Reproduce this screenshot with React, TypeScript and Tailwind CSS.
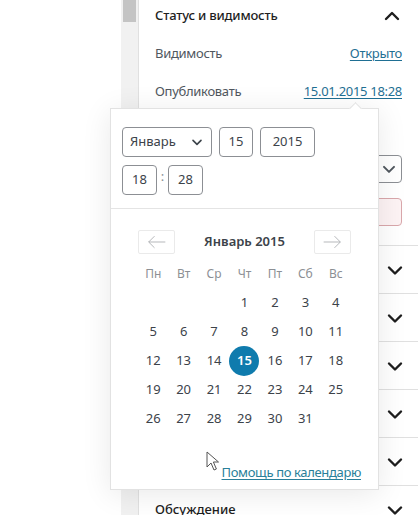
const days: (number | null)[] = [null, null, null, ...Array.from({ length: 31 }, (_, i) => i + 1)];
const weekdays = ["Пн", "Вт", "Ср", "Чт", "Пт", "Сб", "Вс"];
// titles of these panels sit under the date popover, only the last one shows
const panels = ["", "", "", "", "", "Обсуждение"];

function Chevron({ up, className }: { up?: boolean; className?: string }) {
  return (
    <svg viewBox="0 0 24 24" className={className} fill="none" stroke="currentColor" strokeWidth={2.4} strokeLinecap="round" strokeLinejoin="round">
      <path d={up ? "M6 15l6-6 6 6" : "M6 9.5l6 6 6-6"} />
    </svg>
  );
}

function Arrow({ right }: { right?: boolean }) {
  return (
    <svg viewBox="0 0 24 16" className="w-[20px] h-[14px]" fill="none" stroke="currentColor" strokeWidth={1}>
      <path d={right ? "M2 8h20M15 1l7 7-7 7" : "M22 8H2M9 1L2 8l7 7"} />
    </svg>
  );
}

function DatePopover() {
  return (
    <div className="absolute left-[110px] top-[108px] w-[269px] h-[382px] bg-white border border-[#e2e2e2] shadow-[0_4px_28px_rgba(0,0,0,0.09)]">
      <div className="absolute -top-[5px] left-[240px] w-[9px] h-[9px] rotate-45 bg-white border-l border-t border-[#e2e2e2]" />
      <div className="px-[11px] pt-[18px]">
        <div className="flex gap-[7px]">
          <div className="w-[90px] h-[30px] border border-[#8c8f94] rounded-[4px] flex items-center justify-between pl-[7px] pr-[6px] text-[13px] text-[#3c434a]">
            Январь
            <Chevron className="w-[16px] h-[16px] text-[#3c434a]" />
          </div>
          <div className="w-[34px] h-[30px] border border-[#8c8f94] rounded-[4px] flex items-center justify-center text-[13px] text-[#3c434a]">15</div>
          <div className="w-[55px] h-[30px] border border-[#8c8f94] rounded-[4px] flex items-center justify-center text-[13px] text-[#3c434a]">2015</div>
        </div>
        <div className="flex items-center mt-[8px]">
          <div className="w-[35px] h-[30px] border border-[#8c8f94] rounded-[4px] flex items-center justify-center text-[13px] text-[#3c434a]">18</div>
          <span className="w-[11px] text-center text-[13px] text-[#8c8f94] -mt-[6px]">:</span>
          <div className="w-[35px] h-[30px] border border-[#8c8f94] rounded-[4px] flex items-center justify-center text-[13px] text-[#3c434a]">28</div>
        </div>
      </div>
      <div className="mt-[13px] border-t border-[#e4e4e4]" />
      <div className="w-[213px] mx-auto pt-[21px]">
        <div className="flex items-center justify-between h-[24px]">
          <div className="w-[37px] h-[24px] border border-[#eaeaea] rounded-[2px] flex items-center justify-center text-[#a7aaad]">
            <Arrow />
          </div>
          <span className="text-[13px] font-semibold text-[#3c434a]">Январь 2015</span>
          <div className="w-[37px] h-[24px] border border-[#eaeaea] rounded-[2px] flex items-center justify-center text-[#a7aaad]">
            <Arrow right />
          </div>
        </div>
        <div className="grid grid-cols-7 mt-[5px]">
          {weekdays.map((w) => (
            <div key={w} className="h-[29px] flex items-center justify-center text-[12px] text-[#8c8f94]">{w}</div>
          ))}
          {days.map((d, i) => (
            <div key={i} className="h-[29px] flex items-center justify-center text-[13px] text-[#3c434a]">
              {d === 15 ? (
                <span className="w-[30px] h-[30px] rounded-full bg-[#0f7bad] text-white font-semibold flex items-center justify-center">15</span>
              ) : (
                d
              )}
            </div>
          ))}
        </div>
      </div>
      <div className="flex justify-end pr-[17px] mt-[30px]">
        <span className="text-[13px] tracking-[-0.35px] text-[#2a7f99] underline underline-offset-2">Помощь по календарю</span>
      </div>
    </div>
  );
}

export default function App() {
  return (
    <div className="relative w-[418px] h-[515px] overflow-hidden bg-white font-['Noto_Sans','Open_Sans',sans-serif]">
      <div className="flex h-full">
        <div className="w-[121px] shrink-0 bg-white" />
        <div className="w-[17px] shrink-0 bg-[#f1f1f1] pl-[2px] pr-[2px]">
          <div className="h-[22px] bg-[#c4c4c4]" />
        </div>
        <div className="flex-1 border-l border-[#e0e0e0] bg-white">
          <div className="border-b border-[#e0e0e0]">
            <div className="h-[32px] flex items-center justify-between pl-[16px] pr-[14px]">
              <span className="text-[13px] font-medium tracking-[-0.2px] text-[#1e1e1e]">Статус и видимость</span>
              <Chevron up className="w-[24px] h-[24px] text-[#1e1e1e]" />
            </div>
            <div className="pl-[16px] pr-[16px] pt-[3px] tracking-[-0.3px]">
              <div className="h-[38px] flex items-center justify-between text-[13px]">
                <span className="text-[#50575e]">Видимость</span>
                <span className="text-[#1f6f93] underline underline-offset-2">Открыто</span>
              </div>
              <div className="h-[38px] flex items-center justify-between text-[13px]">
                <span className="text-[#50575e]">Опубликовать</span>
                <span className="text-[#1f6f93] underline underline-offset-2">15.01.2015 18:28</span>
              </div>
              <div className="h-[44px]" />
              <div className="h-[28px] border border-[#8c8f94] rounded-[4px] flex items-center justify-end pr-[2px]">
                <Chevron className="w-[20px] h-[20px] text-[#50575e]" />
              </div>
              <div className="mt-[15px] mb-[19px] h-[28px] border border-[#d9a7ab] bg-[#fdf3f4] rounded-[4px]" />
            </div>
          </div>
          {panels.map((p, i) => (
            <div key={i} className="h-[48px] border-b border-[#e0e0e0] flex items-center justify-between pl-[16px] pr-[11px]">
              <span className="text-[13px] font-medium text-[#1e1e1e]">{p}</span>
              <Chevron className="w-[24px] h-[24px] text-[#1e1e1e]" />
            </div>
          ))}
        </div>
      </div>
      <DatePopover />
      <svg className="absolute left-[206px] top-[451px] w-[13px] h-[20px]" viewBox="0 0 13 20">
        <path d="M1 1v15l4-4 3 7 2.4-1-3-7H12.5Z" fill="white" stroke="#555" strokeWidth={1} strokeLinejoin="round" />
      </svg>
    </div>
  );
}
